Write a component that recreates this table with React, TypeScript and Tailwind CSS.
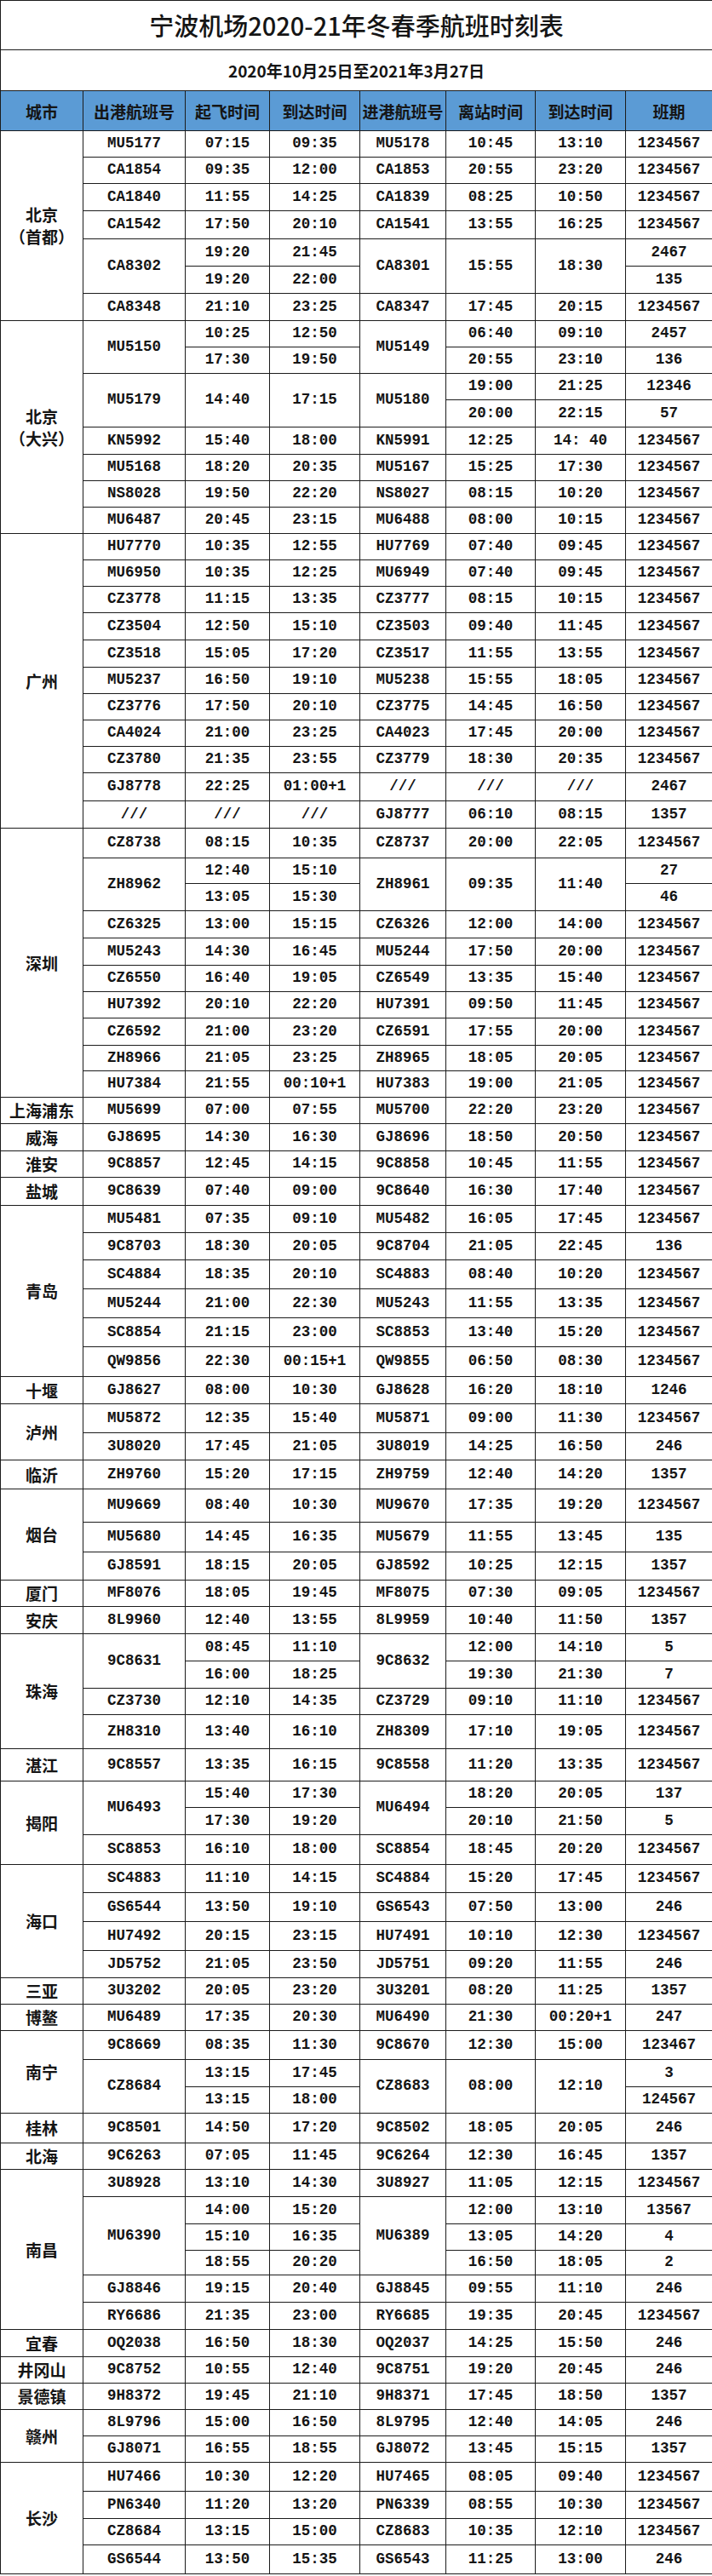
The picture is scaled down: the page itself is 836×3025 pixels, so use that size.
type Cell = string | [string, number];
type Row = [number, ...Cell[]];
type Group = { city: string[]; rows: Row[] };

// row heights measured off the reference, written out so tailwind picks them up
const H: Record<number, string> = {
  29: "h-[29px]",
  30: "h-[30px]",
  31: "h-[31px]",
  32: "h-[32px]",
  33: "h-[33px]",
  34: "h-[34px]",
  35: "h-[35px]",
  38: "h-[38px]",
  39: "h-[39px]",
  40: "h-[40px]",
};

const ALL = "1234567";

const groups: Group[] = [
  {
    city: ["北京", "（首都）"],
    rows: [
      [31, "MU5177", "07:15", "09:35", "MU5178", "10:45", "13:10", ALL],
      [31, "CA1854", "09:35", "12:00", "CA1853", "20:55", "23:20", ALL],
      [32, "CA1840", "11:55", "14:25", "CA1839", "08:25", "10:50", ALL],
      [33, "CA1542", "17:50", "20:10", "CA1541", "13:55", "16:25", ALL],
      [32, ["CA8302", 2], "19:20", "21:45", ["CA8301", 2], ["15:55", 2], ["18:30", 2], "2467"],
      [32, "19:20", "22:00", "135"],
      [32, "CA8348", "21:10", "23:25", "CA8347", "17:45", "20:15", ALL],
    ],
  },
  {
    city: ["北京", "（大兴）"],
    rows: [
      [31, ["MU5150", 2], "10:25", "12:50", ["MU5149", 2], "06:40", "09:10", "2457"],
      [31, "17:30", "19:50", "20:55", "23:10", "136"],
      [31, ["MU5179", 2], ["14:40", 2], ["17:15", 2], ["MU5180", 2], "19:00", "21:25", "12346"],
      [32, "20:00", "22:15", "57"],
      [32, "KN5992", "15:40", "18:00", "KN5991", "12:25", "14: 40", ALL],
      [31, "MU5168", "18:20", "20:35", "MU5167", "15:25", "17:30", ALL],
      [31, "NS8028", "19:50", "22:20", "NS8027", "08:15", "10:20", ALL],
      [31, "MU6487", "20:45", "23:15", "MU6488", "08:00", "10:15", ALL],
    ],
  },
  {
    city: ["广州"],
    rows: [
      [31, "HU7770", "10:35", "12:55", "HU7769", "07:40", "09:45", ALL],
      [31, "MU6950", "10:35", "12:25", "MU6949", "07:40", "09:45", ALL],
      [31, "CZ3778", "11:15", "13:35", "CZ3777", "08:15", "10:15", ALL],
      [32, "CZ3504", "12:50", "15:10", "CZ3503", "09:40", "11:45", ALL],
      [32, "CZ3518", "15:05", "17:20", "CZ3517", "11:55", "13:55", ALL],
      [31, "MU5237", "16:50", "19:10", "MU5238", "15:55", "18:05", ALL],
      [31, "CZ3776", "17:50", "20:10", "CZ3775", "14:45", "16:50", ALL],
      [31, "CA4024", "21:00", "23:25", "CA4023", "17:45", "20:00", ALL],
      [31, "CZ3780", "21:35", "23:55", "CZ3779", "18:30", "20:35", ALL],
      [33, "GJ8778", "22:25", "01:00+1", "///", "///", "///", "2467"],
      [32, "///", "///", "///", "GJ8777", "06:10", "08:15", "1357"],
    ],
  },
  {
    city: ["深圳"],
    rows: [
      [35, "CZ8738", "08:15", "10:35", "CZ8737", "20:00", "22:05", ALL],
      [30, ["ZH8962", 2], "12:40", "15:10", ["ZH8961", 2], ["09:35", 2], ["11:40", 2], "27"],
      [32, "13:05", "15:30", "46"],
      [32, "CZ6325", "13:00", "15:15", "CZ6326", "12:00", "14:00", ALL],
      [32, "MU5243", "14:30", "16:45", "MU5244", "17:50", "20:00", ALL],
      [31, "CZ6550", "16:40", "19:05", "CZ6549", "13:35", "15:40", ALL],
      [31, "HU7392", "20:10", "22:20", "HU7391", "09:50", "11:45", ALL],
      [32, "CZ6592", "21:00", "23:20", "CZ6591", "17:55", "20:00", ALL],
      [30, "ZH8966", "21:05", "23:25", "ZH8965", "18:05", "20:05", ALL],
      [31, "HU7384", "21:55", "00:10+1", "HU7383", "19:00", "21:05", ALL],
    ],
  },
  { city: ["上海浦东"], rows: [[31, "MU5699", "07:00", "07:55", "MU5700", "22:20", "23:20", ALL]] },
  { city: ["威海"], rows: [[32, "GJ8695", "14:30", "16:30", "GJ8696", "18:50", "20:50", ALL]] },
  { city: ["淮安"], rows: [[31, "9C8857", "12:45", "14:15", "9C8858", "10:45", "11:55", ALL]] },
  { city: ["盐城"], rows: [[33, "9C8639", "07:40", "09:00", "9C8640", "16:30", "17:40", ALL]] },
  {
    city: ["青岛"],
    rows: [
      [32, "MU5481", "07:35", "09:10", "MU5482", "16:05", "17:45", ALL],
      [32, "9C8703", "18:30", "20:05", "9C8704", "21:05", "22:45", "136"],
      [34, "SC4884", "18:35", "20:10", "SC4883", "08:40", "10:20", ALL],
      [34, "MU5244", "21:00", "22:30", "MU5243", "11:55", "13:35", ALL],
      [34, "SC8854", "21:15", "23:00", "SC8853", "13:40", "15:20", ALL],
      [35, "QW9856", "22:30", "00:15+1", "QW9855", "06:50", "08:30", ALL],
    ],
  },
  { city: ["十堰"], rows: [[32, "GJ8627", "08:00", "10:30", "GJ8628", "16:20", "18:10", "1246"]] },
  {
    city: ["泸州"],
    rows: [
      [34, "MU5872", "12:35", "15:40", "MU5871", "09:00", "11:30", ALL],
      [32, "3U8020", "17:45", "21:05", "3U8019", "14:25", "16:50", "246"],
    ],
  },
  { city: ["临沂"], rows: [[34, "ZH9760", "15:20", "17:15", "ZH9759", "12:40", "14:20", "1357"]] },
  {
    city: ["烟台"],
    rows: [
      [39, "MU9669", "08:40", "10:30", "MU9670", "17:35", "19:20", ALL],
      [35, "MU5680", "14:45", "16:35", "MU5679", "11:55", "13:45", "135"],
      [33, "GJ8591", "18:15", "20:05", "GJ8592", "10:25", "12:15", "1357"],
    ],
  },
  { city: ["厦门"], rows: [[31, "MF8076", "18:05", "19:45", "MF8075", "07:30", "09:05", ALL]] },
  { city: ["安庆"], rows: [[32, "8L9960", "12:40", "13:55", "8L9959", "10:40", "11:50", "1357"]] },
  {
    city: ["珠海"],
    rows: [
      [32, ["9C8631", 2], "08:45", "11:10", ["9C8632", 2], "12:00", "14:10", "5"],
      [32, "16:00", "18:25", "19:30", "21:30", "7"],
      [31, "CZ3730", "12:10", "14:35", "CZ3729", "09:10", "11:10", ALL],
      [40, "ZH8310", "13:40", "16:10", "ZH8309", "17:10", "19:05", ALL],
    ],
  },
  { city: ["湛江"], rows: [[38, "9C8557", "13:35", "16:15", "9C8558", "11:20", "13:35", ALL]] },
  {
    city: ["揭阳"],
    rows: [
      [31, ["MU6493", 2], "15:40", "17:30", ["MU6494", 2], "18:20", "20:05", "137"],
      [32, "17:30", "19:20", "20:10", "21:50", "5"],
      [35, "SC8853", "16:10", "18:00", "SC8854", "18:45", "20:20", ALL],
    ],
  },
  {
    city: ["海口"],
    rows: [
      [33, "SC4883", "11:10", "14:15", "SC4884", "15:20", "17:45", ALL],
      [34, "GS6544", "13:50", "19:10", "GS6543", "07:50", "13:00", "246"],
      [34, "HU7492", "20:15", "23:15", "HU7491", "10:10", "12:30", ALL],
      [32, "JD5752", "21:05", "23:50", "JD5751", "09:20", "11:55", "246"],
    ],
  },
  { city: ["三亚"], rows: [[31, "3U3202", "20:05", "23:20", "3U3201", "08:20", "11:25", "1357"]] },
  { city: ["博鳌"], rows: [[31, "MU6489", "17:35", "20:30", "MU6490", "21:30", "00:20+1", "247"]] },
  {
    city: ["南宁"],
    rows: [
      [34, "9C8669", "08:35", "11:30", "9C8670", "12:30", "15:00", "123467"],
      [32, ["CZ8684", 2], "13:15", "17:45", ["CZ8683", 2], ["08:00", 2], ["12:10", 2], "3"],
      [31, "13:15", "18:00", "124567"],
    ],
  },
  { city: ["桂林"], rows: [[35, "9C8501", "14:50", "17:20", "9C8502", "18:05", "20:05", "246"]] },
  { city: ["北海"], rows: [[31, "9C6263", "07:05", "11:45", "9C6264", "12:30", "16:45", "1357"]] },
  {
    city: ["南昌"],
    rows: [
      [32, "3U8928", "13:10", "14:30", "3U8927", "11:05", "12:15", ALL],
      [32, ["MU6390", 3], "14:00", "15:20", ["MU6389", 3], "12:00", "13:10", "13567"],
      [31, "15:10", "16:35", "13:05", "14:20", "4"],
      [29, "18:55", "20:20", "16:50", "18:05", "2"],
      [32, "GJ8846", "19:15", "20:40", "GJ8845", "09:55", "11:10", "246"],
      [32, "RY6686", "21:35", "23:00", "RY6685", "19:35", "20:45", ALL],
    ],
  },
  { city: ["宜春"], rows: [[32, "OQ2038", "16:50", "18:30", "OQ2037", "14:25", "15:50", "246"]] },
  { city: ["井冈山"], rows: [[31, "9C8752", "10:55", "12:40", "9C8751", "19:20", "20:45", "246"]] },
  { city: ["景德镇"], rows: [[31, "9H8372", "19:45", "21:10", "9H8371", "17:45", "18:50", "1357"]] },
  {
    city: ["赣州"],
    rows: [
      [31, "8L9796", "15:00", "16:50", "8L9795", "12:40", "14:05", "246"],
      [31, "GJ8071", "16:55", "18:55", "GJ8072", "13:45", "15:15", "1357"],
    ],
  },
  {
    city: ["长沙"],
    rows: [
      [34, "HU7466", "10:30", "12:20", "HU7465", "08:05", "09:40", ALL],
      [32, "PN6340", "11:20", "13:20", "PN6339", "08:55", "10:30", ALL],
      [31, "CZ8684", "13:15", "15:00", "CZ8683", "10:35", "12:10", ALL],
      [34, "GS6544", "13:50", "15:35", "GS6543", "11:25", "13:00", "246"],
    ],
  },
];

const headers = ["城市", "出港航班号", "起飞时间", "到达时间", "进港航班号", "离站时间", "到达时间", "班期"];

const cjk = "font-['Noto_Sans_CJK_SC',sans-serif]";
const td = "border border-[#1c1c1c] p-0 text-center align-middle";

export default function App() {
  return (
    <div className="w-[836px] bg-white text-[#151515]">
      <table className="w-[836px] table-fixed border-collapse">
        <colgroup>
          <col className="w-[97px]" />
          <col className="w-[120px]" />
          <col className="w-[99px]" />
          <col className="w-[106px]" />
          <col className="w-[101px]" />
          <col className="w-[105px]" />
          <col className="w-[106px]" />
          <col className="w-[102px]" />
        </colgroup>
        <thead>
          <tr className="h-[58px]">
            <td colSpan={8} className={`${td} ${cjk} text-[29px] font-medium leading-none`}>
              宁波机场2020-21年冬春季航班时刻表
            </td>
          </tr>
          <tr className="h-[48px]">
            <td colSpan={8} className={`${td} ${cjk} text-[19px] font-bold leading-none`}>
              2020年10月25日至2021年3月27日
            </td>
          </tr>
          <tr className="h-[47px] bg-[#5b9bd5]">
            {headers.map((h, i) => (
              <th key={i} className={`${td} ${cjk} text-[19px] font-bold leading-none`}>
                {h}
              </th>
            ))}
          </tr>
        </thead>
        <tbody>
          {groups.map((g, gi) =>
            g.rows.map((row, ri) => {
              const [h, ...cells] = row;
              return (
                <tr key={`${gi}-${ri}`} className={H[h]}>
                  {ri === 0 && (
                    <td
                      rowSpan={g.rows.length}
                      className={`${td} ${cjk} text-[19px] font-bold leading-[26px] whitespace-nowrap`}
                    >
                      {g.city.map((line, li) => (
                        <div key={li}>{line}</div>
                      ))}
                    </td>
                  )}
                  {cells.map((c, ci) => {
                    const [text, span] = typeof c === "string" ? [c, 1] : c;
                    return (
                      <td
                        key={ci}
                        rowSpan={span}
                        className={`${td} font-['Liberation_Mono',monospace] text-[17.5px] font-bold leading-none whitespace-pre`}
                      >
                        {text}
                      </td>
                    );
                  })}
                </tr>
              );
            })
          )}
        </tbody>
      </table>
    </div>
  );
}
